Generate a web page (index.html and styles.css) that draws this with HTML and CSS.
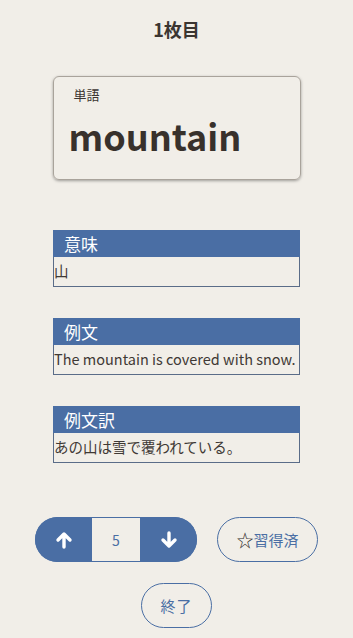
FILE: index.html
```html
<!DOCTYPE html>
<html lang="ja">
<head>
<meta charset="utf-8">
<link rel="stylesheet" href="styles.css">
</head>
<body>
<main class="page">
  <h1 class="title">1枚目</h1>
  <section class="card">
    <div class="card-label">単語</div>
    <div class="card-word">mountain</div>
  </section>
  <section class="field">
    <div class="field-head">意味</div>
    <div class="field-body">山</div>
  </section>
  <section class="field">
    <div class="field-head">例文</div>
    <div class="field-body">The mountain is covered with snow.</div>
  </section>
  <section class="field">
    <div class="field-head">例文訳</div>
    <div class="field-body">あの山は雪で覆われている。</div>
  </section>
  <div class="controls">
    <div class="stepper">
      <button class="step-btn" aria-label="up">
        <svg width="18" height="18" viewBox="0 0 18 18"><path d="M9 16V4M3 9L9 3L15 9" fill="none" stroke="#fff" stroke-width="3.4" stroke-linecap="round" stroke-linejoin="round"/></svg>
      </button>
      <div class="step-num">5</div>
      <button class="step-btn" aria-label="down">
        <svg width="18" height="18" viewBox="0 0 18 18"><path d="M9 2V14M3 9L9 15L15 9" fill="none" stroke="#fff" stroke-width="3.4" stroke-linecap="round" stroke-linejoin="round"/></svg>
      </button>
    </div>
    <button class="outline-btn learned"><span class="star">☆</span>習得済</button>
  </div>
  <button class="outline-btn finish">終了</button>
</main>
</body>
</html>
```
FILE: styles.css
```css
html, body {
  margin: 0;
  padding: 0;
  background: #f1eee8;
}
body {
  font-family: "Noto Sans CJK JP", "Noto Sans", sans-serif;
  color: #3b3531;
}
.page {
  display: flex;
  flex-direction: column;
  align-items: center;
  padding-top: 16px;
}
.title {
  margin: 0;
  font-size: 18px;
  line-height: 26px;
  font-weight: 700;
}
.card {
  margin-top: 34px;
  width: 246px;
  height: 102px;
  border: 1px solid #a9a39b;
  border-radius: 6px;
  box-shadow: 0 1px 3px rgba(0,0,0,0.35);
  display: flex;
  flex-direction: column;
}
.card-label {
  font-size: 13px;
  line-height: 18px;
  margin-top: 9px;
  padding-left: 20px;
}
.card-word {
  font-size: 36px;
  font-weight: 700;
  line-height: 44px;
  margin-top: 9px;
  padding-left: 15px;
  color: #38312c;
}
.field {
  width: 247px;
  display: flex;
  flex-direction: column;
}
.card + .field { margin-top: 50px; }
.field + .field { margin-top: 31px; }
.field-head {
  background: #4a6ea4;
  color: #fff;
  height: 27px;
  line-height: 27px;
  font-size: 17px;
  padding-left: 11px;
}
.field-body {
  border: 1px solid #5a6c88;
  border-top: none;
  height: 29px;
  line-height: 27px;
  font-size: 14.5px;
  padding-left: 0;
  white-space: nowrap;
  color: #3f3935;
}
.controls {
  margin-top: 54px;
  display: flex;
  gap: 20px;
}
.stepper {
  display: flex;
  width: 162px;
  height: 45px;
  border-radius: 23px;
  overflow: hidden;
  background: #4a6ea4;
}
.step-btn {
  width: 57px;
  height: 45px;
  border: none;
  background: #4a6ea4;
  padding: 0;
  display: flex;
  align-items: center;
  justify-content: center;
}
.step-num {
  width: 48px;
  background: #f1eee8;
  color: #4a6ea4;
  font-size: 14px;
  display: flex;
  align-items: center;
  justify-content: center;
  margin: 1px 0;
}
.outline-btn {
  font-family: "Noto Sans CJK JP", "Noto Sans", sans-serif;
  background: transparent;
  border: 1px solid #4a6ea4;
  color: #4a6ea4;
  border-radius: 23px;
  height: 45px;
  font-size: 15px;
  padding: 0;
  display: flex;
  align-items: center;
  justify-content: center;
}
.learned {
  width: 101px;
}
.star {
  color: #2f2a27;
  font-size: 17px;
}
.finish {
  margin-top: 21px;
  width: 71px;
  letter-spacing: 1px;
}
```
